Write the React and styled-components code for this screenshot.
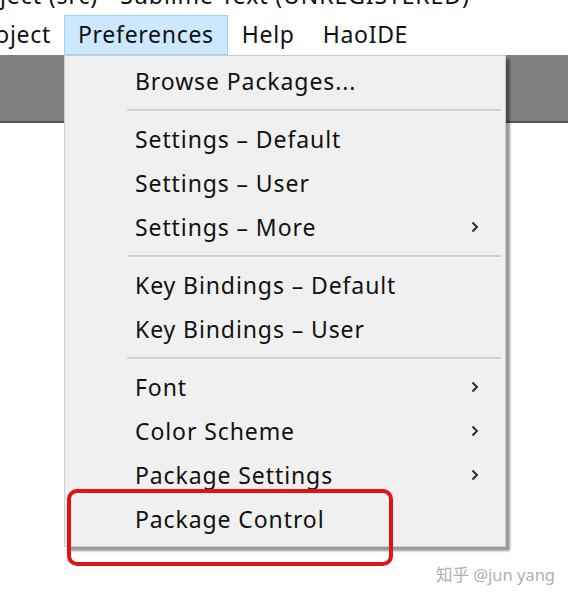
import React from "react";
import styled, { createGlobalStyle } from "styled-components";

const GlobalStyle = createGlobalStyle`
    html, body {
        margin: 0;
        padding: 0;
        background: #ffffff;
    }
    body {
        font-family: "Noto Sans", "Open Sans", "DejaVu Sans", sans-serif;
        color: #111111;
    }
`;

const Page = styled.div`
    position: relative;
    width: 568px;
    height: 600px;
    overflow: hidden;
    background: #ffffff;
`;

const TitleStrip = styled.div`
    height: 15px;
    overflow: hidden;
    white-space: nowrap;
`;

const TitleText = styled.div`
    margin-top: -17px;
    margin-left: 0;
    font-size: 23px;
    letter-spacing: 0.9px;
    line-height: 24px;
    color: #111;
`;

const MenuBar = styled.div`
    display: flex;
    align-items: stretch;
    height: 40px;
    background: #ffffff;
    white-space: nowrap;
`;

const MenuBarItem = styled.div`
    display: flex;
    align-items: center;
    padding: 0 13px 2px;
    font-size: 23px;
    letter-spacing: 0.7px;
    border: 1px solid ${props => (props.$active ? "#99d1ff" : "transparent")};
    background: ${props => (props.$active ? "#cce8ff" : "transparent")};
`;

/* the menu to the left is scrolled out of view, only its tail shows */
const ClippedItem = styled(MenuBarItem)`
    width: 64px;
    box-sizing: border-box;
    justify-content: flex-end;
    overflow: hidden;
    border: none;
`;

const GrayBand = styled.div`
    height: 66px;
    background: #808080;
    border-bottom: 2px solid #555555;
`;

const Dropdown = styled.div`
    position: absolute;
    left: 64px;
    top: 55px;
    width: 436px;
    padding: 3px 2px 5px 2px;
    background: #f0f0f0;
    border: 1px solid #cccccc;
    box-shadow: 4px 4px 2px rgba(0, 0, 0, 0.4);
    display: flex;
    flex-direction: column;
`;

const Item = styled.div`
    display: flex;
    align-items: center;
    justify-content: space-between;
    height: 44px;
    padding: 0 24px 0 68px;
    font-size: 23px;
    letter-spacing: 0.9px;
    color: #111111;
    white-space: nowrap;
`;

const Separator = styled.div`
    height: 14px;
    display: flex;
    align-items: center;
    padding-left: 60px;
    padding-right: 2px;

    &::after {
        content: "";
        flex: 1;
        height: 2px;
        background: #d0d0d0;
        border-bottom: 1px solid #f8f8f8;
    }
`;

const Highlight = styled.div`
    position: absolute;
    left: 67px;
    top: 489px;
    width: 318px;
    height: 69px;
    border: 4px solid #e01414;
    border-radius: 10px;
`;

const Watermark = styled.div`
    position: absolute;
    right: 13px;
    top: 562px;
    font-family: "Noto Sans", "Noto Sans CJK SC", sans-serif;
    font-size: 16.5px;
    color: #b0b0b0;
`;

const Chevron = () => (
    <svg width="8" height="12" viewBox="0 0 8 12">
        <path d="M1.5 1.5 L6 6 L1.5 10.5" fill="none" stroke="#222" strokeWidth="1.8" />
    </svg>
);

const groups = [
    [{ label: "Browse Packages..." }],
    [
        { label: "Settings – Default" },
        { label: "Settings – User" },
        { label: "Settings – More", sub: true },
    ],
    [
        { label: "Key Bindings – Default" },
        { label: "Key Bindings – User" },
    ],
    [
        { label: "Font", sub: true },
        { label: "Color Scheme", sub: true },
        { label: "Package Settings", sub: true },
        { label: "Package Control" },
    ],
];

const App = () => (
    <Page>
        <GlobalStyle />
        <TitleStrip>
            <TitleText>ject (src) - Sublime Text (UNREGISTERED)</TitleText>
        </TitleStrip>
        <MenuBar>
            <ClippedItem>Project</ClippedItem>
            <MenuBarItem $active>Preferences</MenuBarItem>
            <MenuBarItem>Help</MenuBarItem>
            <MenuBarItem>HaoIDE</MenuBarItem>
        </MenuBar>
        <GrayBand />

        <Dropdown>
            {groups.map((group, gi) => (
                <React.Fragment key={gi}>
                    {gi > 0 && <Separator />}
                    {group.map(item => (
                        <Item key={item.label}>
                            <span>{item.label}</span>
                            {item.sub && <Chevron />}
                        </Item>
                    ))}
                </React.Fragment>
            ))}
        </Dropdown>

        <Highlight />
        <Watermark>知乎 @jun yang</Watermark>
    </Page>
);

export default App;
